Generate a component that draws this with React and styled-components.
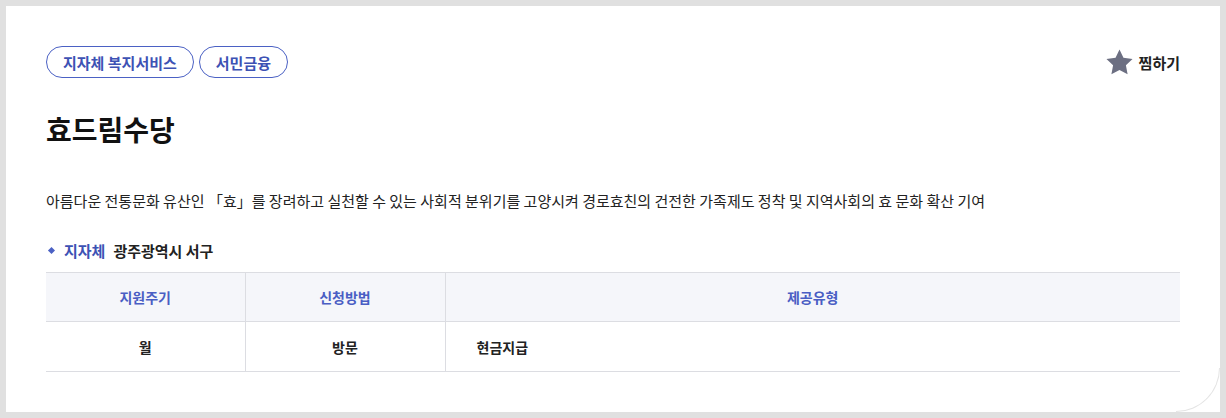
import styled, { createGlobalStyle } from "styled-components";

const GlobalStyle = createGlobalStyle`
    html, body {
        margin: 0;
        padding: 0;
        background: #e0e0e0;
    }
    body {
        font-family: "Noto Sans CJK KR", "Noto Sans", sans-serif;
        color: #222;
    }
`;

const App = () => {
    return (
        <>
            <GlobalStyle />
            <Page>
                <Card>
                    <TopRow>
                        <Tags>
                            {tags.map((t) => (
                                <Tag key={t}>{t}</Tag>
                            ))}
                        </Tags>
                        <Zzim>
                            <svg width="27" height="27" viewBox="0 0 24 24">
                                <path
                                    d="M12 .4l3.5 7.3 8.1 1.1-5.9 5.6 1.5 8.1L12 18.7l-7.2 3.8 1.5-8.1L.4 8.8l8.1-1.1z"
                                    fill="#6c6f82"
                                />
                            </svg>
                            <span>찜하기</span>
                        </Zzim>
                    </TopRow>
                    <Title>효드림수당</Title>
                    <Desc>
                        아름다운 전통문화 유산인 「효」를 장려하고 실천할 수 있는 사회적 분위기를 고양시켜 경로효친의 건전한 가족제도 정착 및 지역사회의 효 문화 확산 기여
                    </Desc>
                    <InfoLine>
                        <Diamond />
                        <InfoLabel>지자체</InfoLabel>
                        <InfoValue>광주광역시 서구</InfoValue>
                    </InfoLine>
                    <Table>
                        <colgroup>
                            <col style={{ width: 199 }} />
                            <col style={{ width: 200 }} />
                            <col />
                        </colgroup>
                        <thead>
                            <tr>
                                <Th>지원주기</Th>
                                <Th>신청방법</Th>
                                <Th>제공유형</Th>
                            </tr>
                        </thead>
                        <tbody>
                            <tr>
                                <Td>월</Td>
                                <Td>방문</Td>
                                <Td left>현금지급</Td>
                            </tr>
                        </tbody>
                    </Table>
                </Card>
            </Page>
        </>
    );
};

const tags = ["지자체 복지서비스", "서민금융"];

const Page = styled.div`
    padding: 6px;
    box-sizing: border-box;
    width: 1226px;
    height: 418px;
`;

const Card = styled.div`
    position: relative;
    background: #fff;
    height: 406px;
    box-sizing: border-box;
    padding: 40px 40px 0 40px;
    display: flex;
    flex-direction: column;
    &::after {
        content: "";
        position: absolute;
        right: 0;
        bottom: 0;
        width: 44px;
        height: 44px;
        box-sizing: border-box;
        border-right: 1px solid #e4e4e4;
        border-bottom: 1px solid #e4e4e4;
        border-bottom-right-radius: 44px;
    }
`;

const TopRow = styled.div`
    display: flex;
    justify-content: space-between;
    align-items: center;
`;

const Tags = styled.div`
    display: flex;
    gap: 5px;
`;

const Tag = styled.span`
    display: inline-flex;
    align-items: center;
    height: 32px;
    box-sizing: border-box;
    padding: 0 16px;
    border: 1px solid #4b61c4;
    border-radius: 16px;
    color: #3d52b4;
    font-size: 15px;
    font-weight: 700;
`;

const Zzim = styled.div`
    display: flex;
    align-items: center;
    gap: 6px;
    font-size: 15px;
    font-weight: 700;
    color: #222;
    padding-top: 1px;
`;

const Title = styled.h1`
    margin: 32px 0 0;
    font-size: 28px;
    line-height: 39px;
    font-weight: 700;
    color: #111;
`;

const Desc = styled.p`
    margin: 41px 0 0;
    font-size: 15px;
    line-height: 22px;
    color: #222;
`;

const InfoLine = styled.div`
    display: flex;
    align-items: center;
    margin-top: 27px;
    height: 22px;
    font-size: 15px;
    font-weight: 700;
`;

const Diamond = styled.span`
    width: 5px;
    height: 5px;
    background: #4b61c4;
    transform: rotate(45deg);
    margin: 0 10px 0 3px;
`;

const InfoLabel = styled.span`
    color: #3d52b4;
    margin-right: 8px;
`;

const InfoValue = styled.span`
    color: #222;
`;

const Table = styled.table`
    margin-top: 11px;
    width: 100%;
    border-collapse: collapse;
    table-layout: fixed;
    border-top: 1px solid #dcdde2;
`;

const Th = styled.th`
    height: 48px;
    background: #f5f6fa;
    color: #4a5ec4;
    font-size: 14px;
    font-weight: 700;
    text-align: center;
    border-bottom: 1px solid #dcdde2;
    border-left: 1px solid #dcdde2;
    padding: 0;
    &:first-child {
        border-left: none;
    }
`;

const Td = styled.td`
    height: 49px;
    font-size: 14px;
    font-weight: 700;
    color: #222;
    text-align: ${({ left }) => (left ? "left" : "center")};
    padding: ${({ left }) => (left ? "0 0 0 31px" : "0")};
    border-bottom: 1px solid #dcdde2;
    border-left: 1px solid #dcdde2;
    &:first-child {
        border-left: none;
    }
`;

export default App;
